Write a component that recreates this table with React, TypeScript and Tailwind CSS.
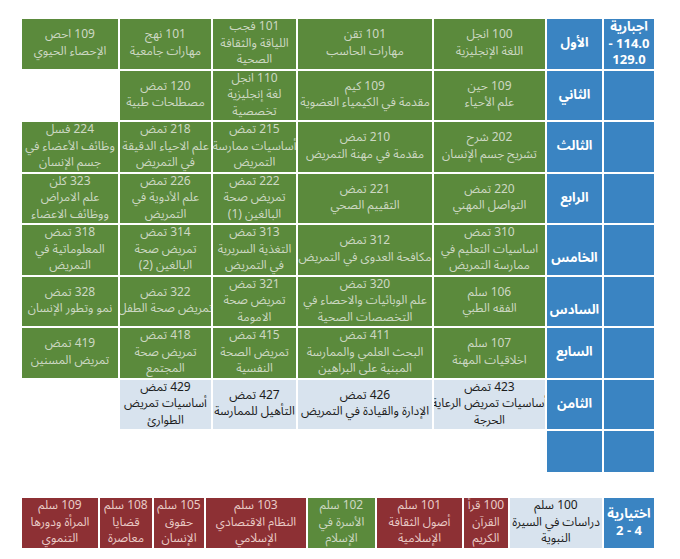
type Kind = "green" | "light" | "red" | "blue" | "none";

type Cell = { kind: Kind; lines: string[] };

const g = (...lines: string[]): Cell => ({ kind: "green", lines });
const l = (...lines: string[]): Cell => ({ kind: "light", lines });
const r = (...lines: string[]): Cell => ({ kind: "red", lines });
const empty: Cell = { kind: "none", lines: [] };

const semesters: { name: string; low?: boolean; cells: Cell[] }[] = [
  {
    name: "الأول",
    cells: [
      g("100 انجل", "اللغة الإنجليزية"),
      g("101 تقن", "مهارات الحاسب"),
      g("101 فجب", "اللياقة والثقافة", "الصحية"),
      g("101 نهج", "مهارات جامعية"),
      g("109 احص", "الإحصاء الحيوي"),
    ],
  },
  {
    name: "الثاني",
    cells: [
      g("109 حين", "علم الأحياء"),
      g("109 كيم", "مقدمة في الكيمياء العضوية"),
      g("110 انجل", "لغة إنجليزية", "تخصصية"),
      g("120 تمض", "مصطلحات طبية"),
      empty,
    ],
  },
  {
    name: "الثالث",
    cells: [
      g("202 شرح", "تشريح جسم الإنسان"),
      g("210 تمض", "مقدمة في مهنة التمريض"),
      g("215 تمض", "أساسيات ممارسة", "التمريض"),
      g("218 تمض", "علم الاحياء الدقيقة", "في التمريض"),
      g("224 فسل", "وظائف الأعضاء في", "جسم الإنسان"),
    ],
  },
  {
    name: "الرابع",
    cells: [
      g("220 تمض", "التواصل المهني"),
      g("221 تمض", "التقييم الصحي"),
      g("222 تمض", "تمريض صحة", "البالغين (1)"),
      g("226 تمض", "علم الأدوية في", "التمريض"),
      g("323 كلن", "علم الامراض", "ووظائف الاعضاء"),
    ],
  },
  {
    name: "الخامس",
    low: true,
    cells: [
      g("310 تمض", "اساسيات التعليم في", "ممارسة التمريض"),
      g("312 تمض", "مكافحة العدوى في التمريض"),
      g("313 تمض", "التغذية السريرية", "في التمريض"),
      g("314 تمض", "تمريض صحة", "البالغين (2)"),
      g("318 تمض", "المعلوماتية في", "التمريض"),
    ],
  },
  {
    name: "السادس",
    low: true,
    cells: [
      g("106 سلم", "الفقه الطبي"),
      g("320 تمض", "علم الوبائيات والاحصاء في", "التخصصات الصحية"),
      g("321 تمض", "تمريض صحة", "الامومة"),
      g("322 تمض", "تمريض صحة الطفل"),
      g("328 تمض", "نمو وتطور الإنسان"),
    ],
  },
  {
    name: "السابع",
    cells: [
      g("107 سلم", "اخلاقيات المهنة"),
      g("411 تمض", "البحث العلمي والممارسة", "المبنية على البراهين"),
      g("415 تمض", "تمريض الصحة", "النفسية"),
      g("418 تمض", "تمريض صحة", "المجتمع"),
      g("419 تمض", "تمريض المسنين"),
    ],
  },
  {
    name: "الثامن",
    cells: [
      l("423 تمض", "أساسيات تمريض الرعاية", "الحرجة"),
      l("426 تمض", "الإدارة والقيادة في التمريض"),
      l("427 تمض", "التأهيل للممارسة"),
      l("429 تمض", "أساسيات تمريض", "الطوارئ"),
      empty,
    ],
  },
];

const electives: Cell[] = [
  l("100 سلم", "دراسات في السيرة", "النبوية"),
  r("100 قرأ", "القرآن", "الكريم"),
  r("101 سلم", "أصول الثقافة", "الإسلامية"),
  g("102 سلم", "الأسرة في", "الإسلام"),
  r("103 سلم", "النظام الاقتصادي", "الإسلامي"),
  r("105 سلم", "حقوق", "الإنسان"),
  r("108 سلم", "قضايا", "معاصرة"),
  r("109 سلم", "المرأة ودورها", "التنموي"),
];

const kindClass: Record<Kind, string> = {
  green: "bg-[#5b8a3c] text-[#cdd8c3]",
  light: "bg-[#d8e3ee] text-[#1c1c1c]",
  red: "bg-[#8d3034] text-[#e9cbc6]",
  blue: "bg-[#3a84c2] text-white font-bold",
  none: "bg-white",
};

function CourseCell({ cell }: { cell: Cell }) {
  return (
    <div
      className={`flex flex-col items-center justify-center overflow-hidden text-center text-[12px] leading-[16.5px] whitespace-nowrap ${kindClass[cell.kind]}`}
    >
      {cell.lines.map((line, i) => (
        <div key={i}>{line}</div>
      ))}
    </div>
  );
}

function App() {
  return (
    <div
      className="min-h-[559px] bg-white pt-[19px] pl-[22px]"
      style={{ fontFamily: '"Noto Sans Arabic", "DejaVu Sans", sans-serif' }}
    >
      <div
        dir="rtl"
        className="grid w-[632px] grid-cols-[50px_55px_111px_134px_83px_91px_96px] grid-rows-[repeat(8,49.5px)_41px] gap-[2px]"
      >
        {semesters.map((s, row) => (
          <div key={s.name} className="contents">
            <div className="flex flex-col items-center justify-center bg-[#3a84c2] text-[13px] leading-[16.5px] font-bold text-white">
              {row === 0 && (
                <>
                  <div>اجبارية</div>
                  <div dir="ltr">- 114.0</div>
                  <div dir="ltr">129.0</div>
                </>
              )}
            </div>
            <div
              className={`flex items-center justify-center bg-[#3a84c2] text-[13px] font-bold text-white ${s.low ? "pt-[18px]" : ""}`}
            >
              {s.name}
            </div>
            {s.cells.map((c, i) => (
              <CourseCell key={i} cell={c} />
            ))}
          </div>
        ))}
        <div className="bg-[#3a84c2]" />
        <div className="bg-[#3a84c2]" />
      </div>

      <div
        dir="rtl"
        className="mt-[26px] grid h-[50px] w-[632px] grid-cols-[50px_92px_44px_85px_67px_100px_50px_52px_76px] gap-[2px]"
      >
        <div className="flex flex-col items-center justify-center bg-[#3a84c2] text-[13px] leading-[17px] font-bold text-white">
          <div>اختيارية</div>
          <div dir="ltr">2 - 4</div>
        </div>
        {electives.map((c, i) => (
          <CourseCell key={i} cell={c} />
        ))}
      </div>
    </div>
  );
}

export default App;
